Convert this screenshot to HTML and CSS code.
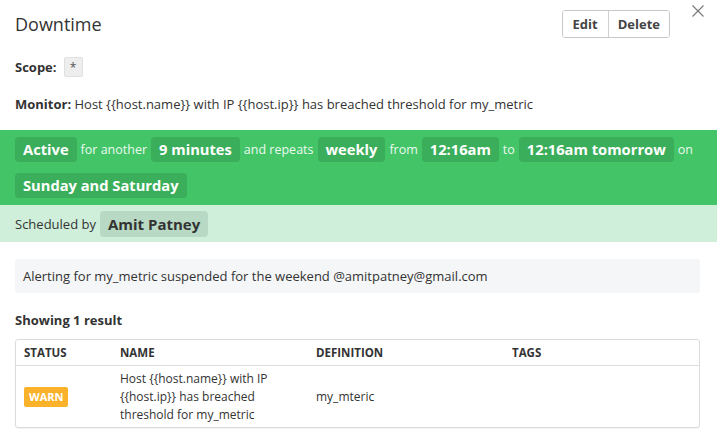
FILE: index.html
```html
<!DOCTYPE html>
<html>
<head>
<meta charset="utf-8">
<link rel="stylesheet" href="styles.css">
</head>
<body>
<div class="panel">
  <div class="header">
    <h1 class="title">Downtime</h1>
    <div class="btn-group">
      <button class="btn">Edit</button>
      <button class="btn">Delete</button>
    </div>
    <button class="close" aria-label="Close">
      <svg width="12" height="12" viewBox="0 0 12 12"><path d="M0.5 0.5 L11.5 11.5 M11.5 0.5 L0.5 11.5" stroke="#777" stroke-width="1.1" fill="none"/></svg>
    </button>
  </div>
  <div class="scope"><b>Scope:</b> <span class="scope-chip">*</span></div>
  <div class="monitor"><b>Monitor:</b> Host {{host.name}} with IP {{host.ip}} has breached threshold for my_metric</div>

  <div class="active-band">
    <span class="chip">Active</span><span class="word">for another</span><span class="chip">9 minutes</span><span class="word">and repeats</span><span class="chip">weekly</span><span class="word">from</span><span class="chip">12:16am</span><span class="word">to</span><span class="chip">12:16am tomorrow</span><span class="word">on</span>
    <span class="chip">Sunday and Saturday</span>
  </div>
  <div class="sched-band">
    <span class="sched-word">Scheduled by</span><span class="sched-chip">Amit Patney</span>
  </div>

  <div class="message">Alerting for my_metric suspended for the weekend @amitpatney@gmail.com</div>

  <div class="results">Showing 1 result</div>
  <div class="table">
    <div class="row head">
      <div class="c1">STATUS</div>
      <div class="c2">NAME</div>
      <div class="c3">DEFINITION</div>
      <div class="c4">TAGS</div>
    </div>
    <div class="row body">
      <div class="c1"><span class="warn">WARN</span></div>
      <div class="c2">Host {{host.name}} with IP {{host.ip}} has breached threshold for my_metric</div>
      <div class="c3">my_mteric</div>
      <div class="c4"></div>
    </div>
  </div>
</div>
</body>
</html>
```

FILE: styles.css
```css
html, body {
  margin: 0;
  padding: 0;
  background: #fff;
}
body {
  font-family: "Open Sans", "Noto Sans", sans-serif;
  color: #333;
  width: 717px;
  height: 443px;
  overflow: hidden;
}
.panel {
  display: flex;
  flex-direction: column;
}
.header {
  position: relative;
  display: flex;
  align-items: flex-start;
  padding: 0 47px 0 15px;
  height: 48px;
}
.title {
  margin: 0;
  padding-top: 11px;
  font-size: 18px;
  font-weight: 400;
  line-height: 26px;
  color: #333;
  flex: 1;
}
.btn-group {
  margin-top: 10px;
  display: flex;
  border: 1px solid #c8c8c8;
  border-radius: 3px;
  height: 28px;
  box-sizing: border-box;
  overflow: hidden;
}
.btn {
  font-family: inherit;
  font-size: 13px;
  font-weight: 700;
  color: #444;
  background: #fff;
  border: 0;
  padding: 0 10px;
  height: 100%;
  line-height: 26px;
}
.btn + .btn {
  border-left: 1px solid #d0d0d0;
  padding: 0 9px 0 9px;
}
.close {
  position: absolute;
  right: 13px;
  top: 5px;
  border: 0;
  background: none;
  padding: 0;
  width: 12px;
  height: 12px;
  display: block;
}
.close svg { display: block; }
.scope {
  display: flex;
  align-items: center;
  padding: 0 15px;
  font-size: 13px;
  height: 20px;
  margin-top: 9px;
}
.scope b { margin-right: 7px; }
.scope-chip {
  display: inline-block;
  width: 19px;
  height: 20px;
  box-sizing: border-box;
  background: #eeeeee;
  border: 1px solid #e0e0e0;
  border-radius: 2px;
  text-align: center;
  line-height: 20px;
  color: #555;
  font-size: 12px;
}
.monitor {
  padding: 0 15px;
  font-size: 13px;
  line-height: 18px;
  margin-top: 18px;
}
.active-band {
  margin-top: 17px;
  background: #43c467;
  padding: 7px 4px 7px 15px;
  display: flex;
  flex-wrap: wrap;
  align-items: center;
  row-gap: 11px;
  color: #fff;
}
.chip {
  display: inline-block;
  background: #3aae5a;
  border-radius: 4px;
  padding: 0 8px;
  height: 25px;
  line-height: 25px;
  font-size: 14.7px;
  font-weight: 700;
  color: #fff;
}
.word {
  font-size: 12.5px;
  padding: 0 4px;
  color: #eafaef;
}
.sched-band {
  background: #d0efdb;
  height: 37px;
  padding: 0 15px;
  display: flex;
  align-items: center;
}
.sched-word {
  font-size: 13px;
  color: #333;
  margin-right: 4px;
}
.sched-chip {
  background: #b8d9c3;
  border-radius: 4px;
  padding: 0 8px;
  height: 26px;
  line-height: 26px;
  font-size: 15px;
  font-weight: 700;
  color: #333;
}
.message {
  margin: 17px 17px 0 15px;
  background: #f5f6f8;
  border-radius: 3px;
  height: 34px;
  line-height: 34px;
  padding: 0 8px;
  font-size: 13px;
  color: #333;
}
.results {
  padding: 0 15px;
  margin-top: 17px;
  font-size: 13px;
  font-weight: 700;
  line-height: 20px;
}
.table {
  margin: 9px 17px 0 15px;
  border: 1px solid #dcdcdc;
  border-radius: 3px;
  box-shadow: 0 1px 1px rgba(0,0,0,0.05);
}
.row {
  display: grid;
  grid-template-columns: 96px 196px 196px 1fr;
  align-items: center;
  padding-left: 8px;
}
.row.head {
  height: 25px;
  font-size: 11.5px;
  font-weight: 700;
  color: #333;
  border-bottom: 1px solid #dedede;
}
.row.body {
  height: 61px;
  font-size: 12px;
  line-height: 18px;
  color: #333;
}
.row.body .c2 {
  padding-right: 16px;
}
.warn {
  display: inline-block;
  background: #fbb22b;
  color: #fff;
  font-weight: 700;
  font-size: 11px;
  border-radius: 2px;
  padding: 0 5px;
  height: 20px;
  line-height: 20px;
}
```
